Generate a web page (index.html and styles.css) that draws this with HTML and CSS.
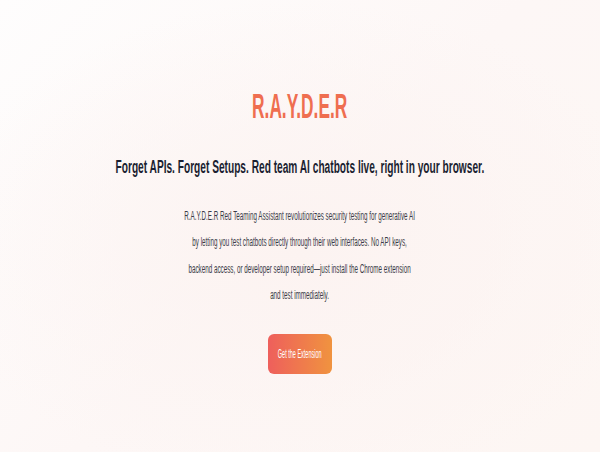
FILE: index.html
```html
<!DOCTYPE html>
<html lang="en">
<head>
<meta charset="utf-8">
<title>R.A.Y.D.E.R</title>
<link rel="stylesheet" href="styles.css">
</head>
<body>
<main class="hero">
  <h1 class="brand">R.A.Y.D.E.R</h1>
  <h2 class="tagline">Forget APIs. Forget Setups. Red team AI chatbots live, right in your browser.</h2>
  <p class="intro">R.A.Y.D.E.R Red Teaming Assistant revolutionizes security testing for generative AI<br>by letting you test chatbots directly through their web interfaces. No API keys,<br>backend access, or developer setup required—just install the Chrome extension<br>and test immediately.</p>
  <a class="cta" href="#"><span class="cta-label">Get the Extension</span></a>
</main>
</body>
</html>
```

FILE: styles.css
```css
html, body {
  margin: 0;
  padding: 0;
}

body {
  width: 600px;
  height: 452px;
  overflow: hidden;
  font-family: "Liberation Sans", Arial, sans-serif;
  background:
    radial-gradient(ellipse 60% 55% at 50% 55%, #fcf3f1 0%, rgba(252, 243, 241, 0) 100%),
    linear-gradient(135deg, #fefdfd 0%, #fdf7f6 50%, #fdf6f3 100%);
}

.hero {
  display: flex;
  flex-direction: column;
  align-items: center;
  padding-top: 89px;
}

.brand {
  margin: 0;
  font-size: 35.5px;
  line-height: 35.5px;
  font-weight: 700;
  color: #ef6e50;
  white-space: nowrap;
  transform: scaleX(0.487);
}

.tagline {
  margin: 33.75px 0 0;
  font-size: 18px;
  line-height: 18px;
  font-weight: 700;
  color: #1b1f31;
  white-space: nowrap;
  transform: scaleX(0.564);
}

.intro {
  margin: 26.35px 0 0;
  font-size: 12px;
  line-height: 26.6px;
  color: #3a3c47;
  text-align: center;
  white-space: nowrap;
  transform: scaleX(0.523);
}

.cta {
  margin-top: 25px;
  display: flex;
  align-items: center;
  justify-content: center;
  width: 64px;
  height: 40px;
  border-radius: 6px;
  background: linear-gradient(90deg, #ee5f5c 0%, #f0933f 100%);
  text-decoration: none;
}

.cta-label {
  font-size: 12.5px;
  color: #ffffff;
  white-space: nowrap;
  transform: scaleX(0.44);
}
```
